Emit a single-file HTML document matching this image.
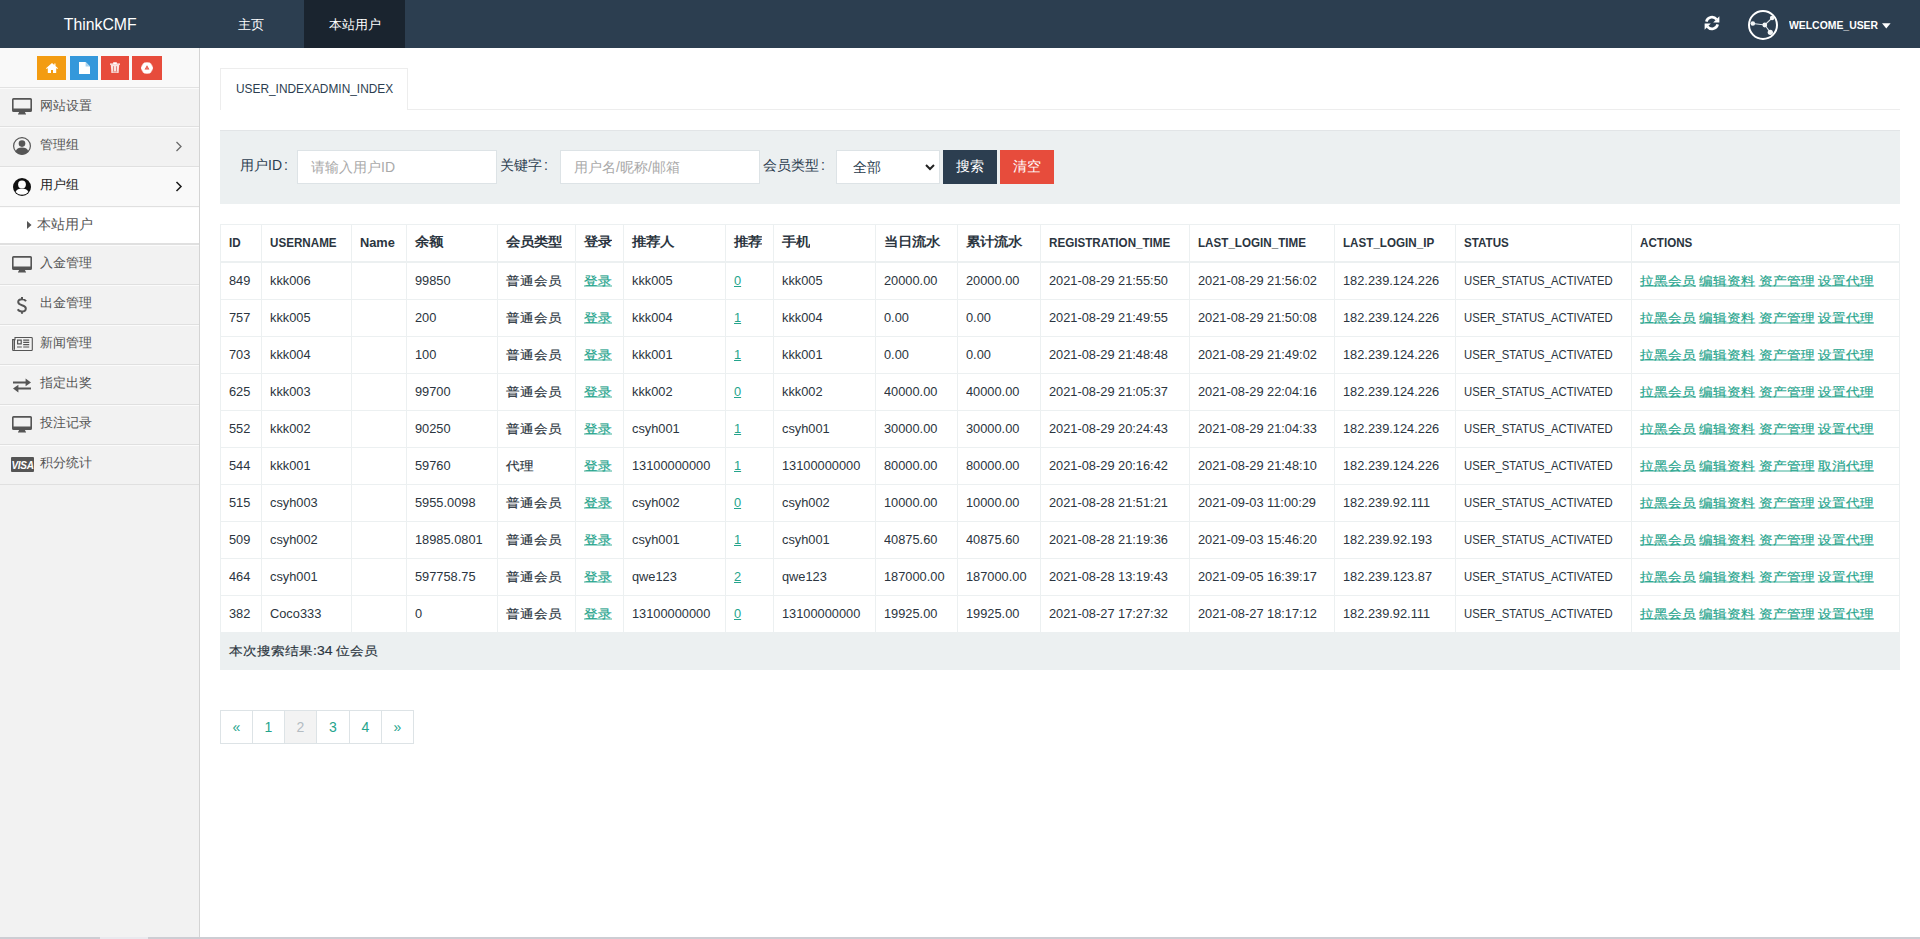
<!DOCTYPE html>
<html><head><meta charset="utf-8"><title>ThinkCMF</title>
<style>
*{box-sizing:border-box}
html,body{margin:0;padding:0;width:1920px;height:939px;overflow:hidden;background:#fff;font-family:"Liberation Sans",sans-serif;color:#2c3e50}
.abs{position:absolute}
#nav{position:absolute;left:0;top:0;width:1920px;height:48px;background:#2c3e50}
#brand{position:absolute;left:0;top:1px;width:200px;height:48px;line-height:48px;text-align:center;color:#fff;font-size:17px}
#brand span{display:inline-block;transform:scaleX(.93)}
.nl{position:absolute;top:0;height:48px;line-height:50px;color:#fff;font-size:13px;text-align:center}
#side{position:absolute;left:0;top:48px;width:200px;height:891px;background:#f2f2f2;border-right:1px solid #d4d4d4}
#short{position:absolute;left:0;top:0;width:199px;height:40px;background:#f9f9f9;border-bottom:1px solid #e2e2e2}
.sb{position:absolute;top:8px;height:24px;color:#fff}
.mi{position:absolute;left:0;width:199px;height:40px;border-bottom:1px solid #e0e0e0;box-shadow:inset 0 1px 0 #fbfbfb;font-size:13.3px;color:#555;line-height:36px}
.mi .t{position:absolute;left:40px;top:0}
.mi svg{position:absolute}
.chev{position:absolute;left:175px;top:14px}
#content{position:absolute;left:200px;top:48px;width:1720px;height:889px}
#tab{position:absolute;left:20px;top:20px;width:188px;height:42px;border:1px solid #ededed;border-bottom:none;background:#fff;font-size:13px;line-height:40px;padding-left:15px;color:#2c3e50}
#tab .u{transform:scaleX(.914)}
#tabline{position:absolute;left:208px;top:61px;width:1492px;height:1px;background:#ededed}
#well{position:absolute;left:20px;top:82px;width:1680px;height:74px;background:#ecf0f1;font-size:14px;box-shadow:inset 0 1px 0 #e2e5e7}
.lab{position:absolute;top:20px;height:33px;line-height:30px;color:#2c3e50}
.inp{position:absolute;top:20px;height:34px;background:#fff;border:1px solid #dde3e6;color:#a9a9a9;font-size:14px;line-height:33px;padding-left:13px}
.btn{position:absolute;top:20px;height:34px;color:#fff;font-size:14px;line-height:33px;text-align:center}
table{position:absolute;left:20px;top:176px;width:1680px;border-collapse:collapse;table-layout:fixed;font-size:14px}
th,td{border:1px solid #ecf0f1;padding:8px;line-height:20px;text-align:left;white-space:nowrap;overflow:hidden;vertical-align:top;height:37px}
th{border-bottom:2px solid #ecf0f1;font-weight:bold;height:37px;padding-bottom:7px}
th .c{position:relative;top:-1px}
th .u{transform:scaleX(.895)}
td,th{color:#2b3540}
td .c,th .c,td .u,th .u,td .l,th .l{display:inline-block;vertical-align:top;line-height:20px}
.c{font-size:14px}
td .c{transform:scaleY(.88);transform-origin:0 4px;-webkit-text-stroke:.18px currentColor}
th .c{transform:scaleY(.9);transform-origin:0 4px}
.u{font-size:13px;display:inline-block;transform:scaleX(.87);transform-origin:0 50%}
.l{font-size:13px;display:inline-block;transform:scaleX(.985);transform-origin:0 50%}
a{color:#25a48c;text-decoration:underline}
td.act{word-spacing:-.6px}
tr.foot td{background:#ecf0f1;border-color:#ecf0f1}
#pag{position:absolute;left:20px;top:662px;height:34px;font-size:14px}
.pg{position:absolute;top:0;width:33px;height:34px;border:1px solid #dde3e6;line-height:32px;text-align:center;color:#25a48c;background:#fff}
#hscroll{position:absolute;left:0;top:937px;width:1920px;height:2px;background:#cdcdd3}
</style></head><body>
<div id="nav">
  <div id="brand"><span>ThinkCMF</span></div>
  <div class="nl" style="left:213px;width:75px">主页</div>
  <div class="nl" style="left:304px;width:101px;background:#1a242f">本站用户</div>
  <svg class="abs" style="left:1704px;top:15px" width="16" height="16" viewBox="0 0 16 16"><path d="M2.3 6.6A5.9 5.9 0 0 1 12.6 4.4" fill="none" stroke="#fff" stroke-width="2.6"/><path d="M15.4 1.2v6.2H9.2z" fill="#fff"/><path d="M13.7 9.4A5.9 5.9 0 0 1 3.4 11.6" fill="none" stroke="#fff" stroke-width="2.6"/><path d="M.6 14.8V8.6h6.2z" fill="#fff"/></svg>
  <svg class="abs" style="left:1747px;top:9px" width="32" height="32" viewBox="0 0 32 32"><circle cx="16" cy="16" r="14" fill="none" stroke="#fff" stroke-width="2"/><path d="M5.8 14.5L17.8 16 25.1 9M17.8 16L23.3 23.3" stroke="#dfe6ea" stroke-width="1.1" fill="none"/><circle cx="5.8" cy="14.5" r="2.3" fill="#f4f6f7"/><circle cx="17.8" cy="16" r="2.4" fill="#f4f6f7"/><circle cx="25.1" cy="9" r="2.2" fill="#f4f6f7"/><circle cx="23.3" cy="23.3" r="2.6" fill="#f4f6f7"/></svg>
  <div class="abs" style="left:1789px;top:0;height:48px;line-height:51px;color:#fff;font-size:11.5px;font-weight:bold"><span style="display:inline-block;transform:scaleX(.905);transform-origin:0 50%">WELCOME_USER</span></div>
  <svg class="abs" style="left:1882px;top:23px" width="9" height="6" viewBox="0 0 9 6"><path d="M0 .3h8.6L4.3 5.5z" fill="#fff"/></svg>
</div>
<div id="side">
  <div id="short">
    <div class="sb" style="left:37px;width:29px;background:#f39c12"><svg class="abs" style="left:9px;top:7px" width="12" height="10" viewBox="0 0 12 10"><path d="M6 0L0 5.2l.7.7L1.8 5v5h3.2V7h2v3h3.2V5l1.1.9.7-.7L9.5 3V.6H8.3v1.3z" fill="#fff"/></svg></div>
    <div class="sb" style="left:70px;width:28px;background:#3498db"><svg class="abs" style="left:9px;top:6px" width="11" height="12" viewBox="0 0 11 12"><path d="M0 0h6.6L11 4.4V12H0z" fill="#fff"/><path d="M6.6 0L11 4.4H6.6z" fill="#a9d3ef"/></svg></div>
    <div class="sb" style="left:101px;width:28px;background:#e74c3c"><svg class="abs" style="left:9px;top:6.3px" width="10" height="11" viewBox="0 0 10 11"><path d="M0 1.6h10v1.2H0zM3.2 1.6V.3h3.6v1.3" fill="#fff"/><path d="M.8 2.8h8.4L8.6 11H1.4z" fill="#fbe4e1"/><path d="M3.5 4.2v5.2M6.5 4.2v5.2M2.6 9.9h4.8" stroke="#e07a70" stroke-width=".9"/></svg></div>
    <div class="sb" style="left:132px;width:30px;background:#e74c3c"><svg class="abs" style="left:9px;top:5.8px" width="12" height="12" viewBox="0 0 12 12"><path d="M6 0l5.2 3v6L6 12 .8 9V3z" fill="#fff" transform="rotate(30 6 6)"/><circle cx="6" cy="6" r="6" fill="#fff" opacity=".6"/><path d="M6 3.3l2.4 4.2H3.6z" fill="#e74c3c"/><path d="M6 4.9l1 1.7H5z" fill="#fff" opacity=".5"/></svg></div>
  </div>
  <div class="mi" style="top:40px;height:39px"><svg style="left:12px;top:10px" width="20" height="17" viewBox="0 0 20 17"><path d="M1.5 0h17A1.5 1.5 0 0 1 20 1.5V12.4a1.6 1.6 0 0 1-1.6 1.6H1.6A1.6 1.6 0 0 1 0 12.4V1.5A1.5 1.5 0 0 1 1.5 0zM1.6 1.8v8.7h16.8V1.8z" fill="#555" fill-rule="evenodd"/><path d="M7 14h6l.4 1.4H14V16.4H6V15.4h.6z" fill="#555"/></svg><span class="t">网站设置</span></div>
  <div class="mi" style="top:79px"><svg style="left:13px;top:10px" width="18" height="18" viewBox="0 0 18 18"><circle cx="9" cy="9" r="8.4" fill="none" stroke="#555" stroke-width="1.2"/><circle cx="9" cy="6.6" r="3.3" fill="#555"/><path d="M2.6 14.2C3.6 11.3 6 10.4 9 10.4s5.4.9 6.4 3.8A8 8 0 0 1 9 17.4a8 8 0 0 1-6.4-3.2z" fill="#555"/></svg><span class="t">管理组</span><svg class="chev" width="8" height="11" viewBox="0 0 8 11"><path d="M1.5 1l4.5 4.5L1.5 10" fill="none" stroke="#6a6a6a" stroke-width="1.3"/></svg></div>
  <div class="mi" style="top:119px;background:#f9f9f9;color:#222"><svg style="left:13px;top:10.5px" width="18" height="18" viewBox="0 0 18 18"><circle cx="9" cy="9" r="9" fill="#111"/><circle cx="9" cy="6.4" r="3.9" fill="#fff"/><path d="M2.6 14.1C3.7 11.3 6.1 10.6 9 10.6s5.3.7 6.4 3.5A7.5 7.5 0 0 1 9 16.6a7.5 7.5 0 0 1-6.4-2.5z" fill="#fff"/></svg><span class="t">用户组</span><svg class="chev" width="8" height="11" viewBox="0 0 8 11"><path d="M1.5 1l4.5 4.5L1.5 10" fill="none" stroke="#1a1a1a" stroke-width="1.5"/></svg></div>
  <div class="mi" style="top:159px;height:38px;background:#fff;line-height:34px;border-bottom:2px solid #e0e0e0"><svg style="left:27px;top:14px" width="5" height="8" viewBox="0 0 5 8"><path d="M0 0l4.5 4L0 8z" fill="#555"/></svg><span class="t" style="left:37px;font-size:14px">本站用户</span></div>
  <div class="mi" style="top:197px"><svg style="left:12px;top:11px" width="20" height="17" viewBox="0 0 20 17"><path d="M1.5 0h17A1.5 1.5 0 0 1 20 1.5V12.4a1.6 1.6 0 0 1-1.6 1.6H1.6A1.6 1.6 0 0 1 0 12.4V1.5A1.5 1.5 0 0 1 1.5 0zM1.6 1.8v8.7h16.8V1.8z" fill="#555" fill-rule="evenodd"/><path d="M7 14h6l.4 1.4H14V16.4H6V15.4h.6z" fill="#555"/></svg><span class="t">入金管理</span></div>
  <div class="mi" style="top:237px"><svg style="left:16px;top:11px" width="12" height="19" viewBox="0 0 12 19"><path d="M6 1v2.2M6 15.5v2.3M10 5.2C9.3 3.9 8 3.2 6 3.2 3.6 3.2 2.2 4.4 2.2 6.1c0 4 7.6 2.2 7.6 6.3 0 1.8-1.6 3.1-3.9 3.1-2 0-3.4-.8-4.1-2.2" fill="none" stroke="#555" stroke-width="2"/></svg><span class="t">出金管理</span></div>
  <div class="mi" style="top:277px"><svg style="left:12px;top:12px" width="21" height="14" viewBox="0 0 21 14"><path d="M3 .55h16.4a.9.9 0 0 1 .9.9V12.6a.9.9 0 0 1-.9.9H1.5a.9.9 0 0 1-.9-.9V2.6H3z" fill="none" stroke="#555" stroke-width="1.1"/><path d="M1.6 2.8v9.9H3V2.8z" fill="#555"/><path d="M5 2.6h4.8v4.8H5zM6.2 3.8v2.4h2.4V3.8z" fill="#555" fill-rule="evenodd"/><path d="M11.2 2.6h6v1.2h-6zM11.2 4.8h6V6h-6zM11.2 7h6v1.2h-6zM5 9.4h4.8v1.2H5zM11.2 9.4h6v1.2h-6z" fill="#555"/></svg><span class="t">新闻管理</span></div>
  <div class="mi" style="top:317px"><svg style="left:12px;top:12.7px" width="20" height="15" viewBox="0 0 20 15"><path d="M1 3.6h12.6V.6L19 4.4l-5.4 3.8V5.4H1z" fill="#555"/><path d="M19 9.6H6.4V6.8L1 10.6l5.4 3.8v-3H19z" fill="#555"/></svg><span class="t">指定出奖</span></div>
  <div class="mi" style="top:357px"><svg style="left:12px;top:11px" width="20" height="17" viewBox="0 0 20 17"><path d="M1.5 0h17A1.5 1.5 0 0 1 20 1.5V12.4a1.6 1.6 0 0 1-1.6 1.6H1.6A1.6 1.6 0 0 1 0 12.4V1.5A1.5 1.5 0 0 1 1.5 0zM1.6 1.8v8.7h16.8V1.8z" fill="#555" fill-rule="evenodd"/><path d="M7 14h6l.4 1.4H14V16.4H6V15.4h.6z" fill="#555"/></svg><span class="t">投注记录</span></div>
  <div class="mi" style="top:397px"><svg style="left:11px;top:12px" width="23" height="15" viewBox="0 0 23 15"><rect x="0" y="0" width="23" height="15" rx="1" fill="#555"/><text x="11.5" y="11.6" text-anchor="middle" font-family="Liberation Sans" font-weight="bold" font-style="italic" font-size="10" fill="#fff" letter-spacing="-.3">VISA</text></svg><span class="t">积分统计</span></div>
</div>
<div id="content">
  <div id="tab"><span class="u">USER_INDEXADMIN_INDEX</span></div>
  <div id="tabline"></div>
  <div id="well">
    <div class="lab" style="left:20px">用户ID<span style="margin-left:2px">:</span></div>
    <div class="inp" style="left:77px;width:200px">请输入用户ID</div>
    <div class="lab" style="left:280px">关键字<span style="margin-left:2px">:</span></div>
    <div class="inp" style="left:340px;width:200px">用户名/昵称/邮箱</div>
    <div class="lab" style="left:543px">会员类型<span style="margin-left:2px">:</span></div>
    <div class="inp" style="left:616px;width:104px;color:#2c3e50;padding-left:16px">全部<svg class="abs" style="left:88px;top:13px" width="10" height="7" viewBox="0 0 10 7"><path d="M1 1l4 4 4-4" fill="none" stroke="#222" stroke-width="2"/></svg></div>
    <div class="btn" style="left:723px;width:54px;background:#2c3e50">搜索</div>
    <div class="btn" style="left:780px;width:54px;background:#e74c3c">清空</div>
  </div>
  <table>
    <colgroup><col style="width:41px"><col style="width:90px"><col style="width:55px"><col style="width:91px"><col style="width:78px"><col style="width:48px"><col style="width:102px"><col style="width:48px"><col style="width:102px"><col style="width:82px"><col style="width:83px"><col style="width:149px"><col style="width:145px"><col style="width:121px"><col style="width:176px"><col style="width:268px"></colgroup>
    <thead><tr><th><span class="u">ID</span></th><th><span class="u">USERNAME</span></th><th><span class="l">Name</span></th><th><span class="c">余额</span></th><th><span class="c">会员类型</span></th><th><span class="c">登录</span></th><th><span class="c">推荐人</span></th><th><span class="c">推荐</span></th><th><span class="c">手机</span></th><th><span class="c">当日流水</span></th><th><span class="c">累计流水</span></th><th><span class="u">REGISTRATION_TIME</span></th><th><span class="u">LAST_LOGIN_TIME</span></th><th><span class="u">LAST_LOGIN_IP</span></th><th><span class="u">STATUS</span></th><th><span class="u">ACTIONS</span></th></tr></thead>
    <tbody>
<tr><td><span class="l">849</span></td><td><span class="l">kkk006</span></td><td></td><td><span class="l">99850</span></td><td><span class="c">普通会员</span></td><td><a class="c">登录</a></td><td><span class="l">kkk005</span></td><td><a class="l">0</a></td><td><span class="l">kkk005</span></td><td><span class="l">20000.00</span></td><td><span class="l">20000.00</span></td><td><span class="l">2021-08-29 21:55:50</span></td><td><span class="l">2021-08-29 21:56:02</span></td><td><span class="l">182.239.124.226</span></td><td><span class="u">USER_STATUS_ACTIVATED</span></td><td class="act"><a class="c">拉黑会员</a> <a class="c">编辑资料</a> <a class="c">资产管理</a> <a class="c">设置代理</a></td></tr>
<tr><td><span class="l">757</span></td><td><span class="l">kkk005</span></td><td></td><td><span class="l">200</span></td><td><span class="c">普通会员</span></td><td><a class="c">登录</a></td><td><span class="l">kkk004</span></td><td><a class="l">1</a></td><td><span class="l">kkk004</span></td><td><span class="l">0.00</span></td><td><span class="l">0.00</span></td><td><span class="l">2021-08-29 21:49:55</span></td><td><span class="l">2021-08-29 21:50:08</span></td><td><span class="l">182.239.124.226</span></td><td><span class="u">USER_STATUS_ACTIVATED</span></td><td class="act"><a class="c">拉黑会员</a> <a class="c">编辑资料</a> <a class="c">资产管理</a> <a class="c">设置代理</a></td></tr>
<tr><td><span class="l">703</span></td><td><span class="l">kkk004</span></td><td></td><td><span class="l">100</span></td><td><span class="c">普通会员</span></td><td><a class="c">登录</a></td><td><span class="l">kkk001</span></td><td><a class="l">1</a></td><td><span class="l">kkk001</span></td><td><span class="l">0.00</span></td><td><span class="l">0.00</span></td><td><span class="l">2021-08-29 21:48:48</span></td><td><span class="l">2021-08-29 21:49:02</span></td><td><span class="l">182.239.124.226</span></td><td><span class="u">USER_STATUS_ACTIVATED</span></td><td class="act"><a class="c">拉黑会员</a> <a class="c">编辑资料</a> <a class="c">资产管理</a> <a class="c">设置代理</a></td></tr>
<tr><td><span class="l">625</span></td><td><span class="l">kkk003</span></td><td></td><td><span class="l">99700</span></td><td><span class="c">普通会员</span></td><td><a class="c">登录</a></td><td><span class="l">kkk002</span></td><td><a class="l">0</a></td><td><span class="l">kkk002</span></td><td><span class="l">40000.00</span></td><td><span class="l">40000.00</span></td><td><span class="l">2021-08-29 21:05:37</span></td><td><span class="l">2021-08-29 22:04:16</span></td><td><span class="l">182.239.124.226</span></td><td><span class="u">USER_STATUS_ACTIVATED</span></td><td class="act"><a class="c">拉黑会员</a> <a class="c">编辑资料</a> <a class="c">资产管理</a> <a class="c">设置代理</a></td></tr>
<tr><td><span class="l">552</span></td><td><span class="l">kkk002</span></td><td></td><td><span class="l">90250</span></td><td><span class="c">普通会员</span></td><td><a class="c">登录</a></td><td><span class="l">csyh001</span></td><td><a class="l">1</a></td><td><span class="l">csyh001</span></td><td><span class="l">30000.00</span></td><td><span class="l">30000.00</span></td><td><span class="l">2021-08-29 20:24:43</span></td><td><span class="l">2021-08-29 21:04:33</span></td><td><span class="l">182.239.124.226</span></td><td><span class="u">USER_STATUS_ACTIVATED</span></td><td class="act"><a class="c">拉黑会员</a> <a class="c">编辑资料</a> <a class="c">资产管理</a> <a class="c">设置代理</a></td></tr>
<tr><td><span class="l">544</span></td><td><span class="l">kkk001</span></td><td></td><td><span class="l">59760</span></td><td><span class="c">代理</span></td><td><a class="c">登录</a></td><td><span class="l">13100000000</span></td><td><a class="l">1</a></td><td><span class="l">13100000000</span></td><td><span class="l">80000.00</span></td><td><span class="l">80000.00</span></td><td><span class="l">2021-08-29 20:16:42</span></td><td><span class="l">2021-08-29 21:48:10</span></td><td><span class="l">182.239.124.226</span></td><td><span class="u">USER_STATUS_ACTIVATED</span></td><td class="act"><a class="c">拉黑会员</a> <a class="c">编辑资料</a> <a class="c">资产管理</a> <a class="c">取消代理</a></td></tr>
<tr><td><span class="l">515</span></td><td><span class="l">csyh003</span></td><td></td><td><span class="l">5955.0098</span></td><td><span class="c">普通会员</span></td><td><a class="c">登录</a></td><td><span class="l">csyh002</span></td><td><a class="l">0</a></td><td><span class="l">csyh002</span></td><td><span class="l">10000.00</span></td><td><span class="l">10000.00</span></td><td><span class="l">2021-08-28 21:51:21</span></td><td><span class="l">2021-09-03 11:00:29</span></td><td><span class="l">182.239.92.111</span></td><td><span class="u">USER_STATUS_ACTIVATED</span></td><td class="act"><a class="c">拉黑会员</a> <a class="c">编辑资料</a> <a class="c">资产管理</a> <a class="c">设置代理</a></td></tr>
<tr><td><span class="l">509</span></td><td><span class="l">csyh002</span></td><td></td><td><span class="l">18985.0801</span></td><td><span class="c">普通会员</span></td><td><a class="c">登录</a></td><td><span class="l">csyh001</span></td><td><a class="l">1</a></td><td><span class="l">csyh001</span></td><td><span class="l">40875.60</span></td><td><span class="l">40875.60</span></td><td><span class="l">2021-08-28 21:19:36</span></td><td><span class="l">2021-09-03 15:46:20</span></td><td><span class="l">182.239.92.193</span></td><td><span class="u">USER_STATUS_ACTIVATED</span></td><td class="act"><a class="c">拉黑会员</a> <a class="c">编辑资料</a> <a class="c">资产管理</a> <a class="c">设置代理</a></td></tr>
<tr><td><span class="l">464</span></td><td><span class="l">csyh001</span></td><td></td><td><span class="l">597758.75</span></td><td><span class="c">普通会员</span></td><td><a class="c">登录</a></td><td><span class="l">qwe123</span></td><td><a class="l">2</a></td><td><span class="l">qwe123</span></td><td><span class="l">187000.00</span></td><td><span class="l">187000.00</span></td><td><span class="l">2021-08-28 13:19:43</span></td><td><span class="l">2021-09-05 16:39:17</span></td><td><span class="l">182.239.123.87</span></td><td><span class="u">USER_STATUS_ACTIVATED</span></td><td class="act"><a class="c">拉黑会员</a> <a class="c">编辑资料</a> <a class="c">资产管理</a> <a class="c">设置代理</a></td></tr>
<tr><td><span class="l">382</span></td><td><span class="l">Coco333</span></td><td></td><td><span class="l">0</span></td><td><span class="c">普通会员</span></td><td><a class="c">登录</a></td><td><span class="l">13100000000</span></td><td><a class="l">0</a></td><td><span class="l">13100000000</span></td><td><span class="l">19925.00</span></td><td><span class="l">19925.00</span></td><td><span class="l">2021-08-27 17:27:32</span></td><td><span class="l">2021-08-27 18:17:12</span></td><td><span class="l">182.239.92.111</span></td><td><span class="u">USER_STATUS_ACTIVATED</span></td><td class="act"><a class="c">拉黑会员</a> <a class="c">编辑资料</a> <a class="c">资产管理</a> <a class="c">设置代理</a></td></tr>

    <tr class="foot"><td colspan="16"><span class="c">本次搜索结果:34 位会员</span></td></tr>
    </tbody>
  </table>
  <div id="pag">
    <div class="pg" style="left:0">«</div>
    <div class="pg" style="left:32px">1</div>
    <div class="pg" style="left:64px;background:#f3f3f3;color:#b4bcc2">2</div>
    <div class="pg" style="left:96px;width:34px">3</div>
    <div class="pg" style="left:129px">4</div>
    <div class="pg" style="left:161px">»</div>
  </div>
</div>
<div id="hscroll"><div style="position:absolute;left:100px;top:0;width:48px;height:2px;background:#e9e9ee"></div></div>
</body></html>
